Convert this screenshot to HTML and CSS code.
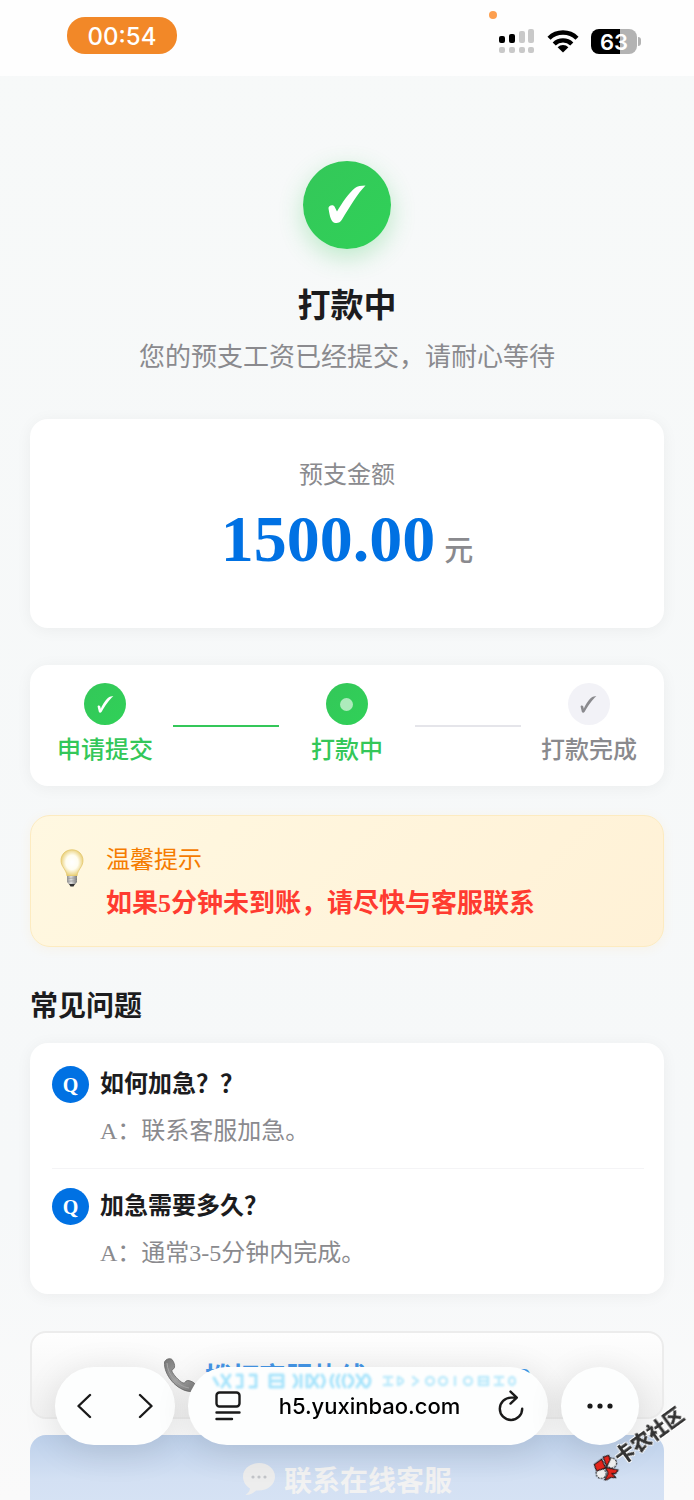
FILE: index.html
```html
<!DOCTYPE html>
<html lang="zh-CN">
<head>
  <meta charset="UTF-8">
  <meta name="viewport" content="width=device-width, initial-scale=1.0">
  <title>打款中</title>
  <link rel="stylesheet" href="styles.css">
</head>
<body>
  <header class="status-bar">
    <div class="clock">00:54</div>
    <div class="status-icons">
      <span class="rec-dot"></span>
      <svg class="signal" width="36" height="24" viewBox="0 0 36 24">
        <g fill="#000"><rect x="0" y="7" width="6" height="7" rx="2"/><rect x="10" y="5" width="6" height="9" rx="2"/></g>
        <g fill="#c9c9c9">
          <rect x="20" y="2" width="6" height="12" rx="2"/><rect x="29" y="0" width="6" height="14" rx="2"/>
          <rect x="0" y="18" width="6" height="6" rx="2"/><rect x="10" y="18" width="6" height="6" rx="2"/>
          <rect x="20" y="18" width="6" height="6" rx="2"/><rect x="29" y="18" width="6" height="6" rx="2"/>
        </g>
      </svg>
      <svg class="wifi" width="32" height="24" viewBox="0 0 32 24">
        <g fill="none" stroke="#000" stroke-width="4.4">
          <path d="M2 9.2 A20 20 0 0 1 30 9.2"/>
          <path d="M7.2 15 A12.6 12.6 0 0 1 24.8 15"/>
        </g>
        <path d="M16 23.5 L10.6 18.2 A7.6 7.6 0 0 1 21.4 18.2 Z" fill="#000"/>
      </svg>
      <span class="battery">63</span>
    </div>
  </header>

  <main class="page">
    <section class="hero">
      <div class="hero-icon">
        <svg width="40" height="40" viewBox="0 0 40 40"><path d="M1.5 23.5 C1 21 5.5 19 7.5 21.5 L10 26.5 C15 18 22 7.500 28 3 C30.500 1 34 .8 38.500 .5 C31 8 22 23 15 34.500 C13 38.500 8 39 5.500 36.500 C3 33.500 2.300 28 1.500 23.500 Z" fill="#fff"/></svg>
      </div>
      <h1>打款中</h1>
      <p>您的预支工资已经提交，请耐心等待</p>
    </section>

    <section class="card amount-card">
      <p class="amount-label">预支金额</p>
      <p class="amount"><span>1500.00</span><span class="unit">元</span></p>
    </section>

    <section class="card steps">
      <div class="step done">
        <span class="step-icon">
          <svg width="17" height="17" viewBox="0 0 40 40"><path d="M1.500 25 C1 22 6 21 7.500 24 L9 30 C14 18 22 7 28 3 C31 1 34 .8 38.500 .5 C29 8 19 23 11 37 C9 40 6 40 4.500 37.500 Z" fill="currentColor"/></svg>
        </span>
        <span class="step-label">申请提交</span>
      </div>
      <div class="line line-done"></div>
      <div class="step done">
        <span class="step-icon"><span class="step-dot"></span></span>
        <span class="step-label">打款中</span>
      </div>
      <div class="line"></div>
      <div class="step">
        <span class="step-icon">
          <svg width="17" height="17" viewBox="0 0 40 40"><path d="M1.500 25 C1 22 6 21 7.500 24 L9 30 C14 18 22 7 28 3 C31 1 34 .8 38.500 .5 C29 8 19 23 11 37 C9 40 6 40 4.500 37.500 Z" fill="currentColor"/></svg>
        </span>
        <span class="step-label">打款完成</span>
      </div>
    </section>

    <section class="tip">
      <svg class="bulb" width="24" height="38" viewBox="0 0 24 38">
        <defs>
          <radialGradient id="glass" cx="50%" cy="48%" r="55%">
            <stop offset="0" stop-color="#fff"/><stop offset=".5" stop-color="#fffdf0"/><stop offset="1" stop-color="#e6c967"/>
          </radialGradient>
          <linearGradient id="cap"><stop offset="0" stop-color="#8f8f8f"/><stop offset=".4" stop-color="#e2e2e2"/><stop offset="1" stop-color="#777"/></linearGradient>
        </defs>
        <path d="M12 .8 C5.500 .8 1 5.500 1 11.500 C1 18 6.500 20.500 7 27 L17 27 C17.500 20.500 23 18 23 11.500 C23 5.500 18.500 .8 12 .8 Z" fill="url(#glass)" stroke="#e3c66c" stroke-width=".8"/>
        <path d="M7 27 H17 V33 L15 35.500 H9 L7 33 Z" fill="url(#cap)"/>
        <path d="M7 29.500 L17 28.800 M7 32.300 L17 31.600" stroke="#999" stroke-width=".7"/>
        <path d="M9 35 H15 L13.500 37.500 H10.500 Z" fill="#333"/>
      </svg>
      <div>
        <p class="tip-title">温馨提示</p>
        <p class="tip-text">如果5分钟未到账，请尽快与客服联系</p>
      </div>
    </section>

    <h2>常见问题</h2>
    <section class="card faq">
      <div class="faq-item">
        <div class="question"><span class="q-badge">Q</span>如何加急？？</div>
        <p class="answer">A：联系客服加急。</p>
      </div>
      <div class="faq-item">
        <div class="question"><span class="q-badge">Q</span>加急需要多久？</div>
        <p class="answer">A：通常3-5分钟内完成。</p>
      </div>
    </section>

    <div class="actions">
      <button class="btn btn-phone" type="button">
        <svg width="34" height="34" viewBox="0 0 34 34">
          <defs><linearGradient id="handset" x1="0" y1="0" x2="1" y2="1"><stop offset="0" stop-color="#777"/><stop offset=".5" stop-color="#a5a5a5"/><stop offset="1" stop-color="#777"/></linearGradient></defs>
          <path d="M1.500 4 C3 .8 7 -.2 9 1.500 C11 4 12 7 11.500 9.500 C11 11.500 8.500 11 8.800 13 C10.500 17 15.500 22.500 20 25 C22.500 25.500 22 22.800 24.500 22.500 C27.500 22.500 31.500 24.500 33 27 C34 30 30 33.500 27 33.500 C14 32.500 .5 17 1.500 4 Z" fill="url(#handset)" stroke="#666" stroke-width=".8"/>
          <path d="M4 5 C4.500 17 15 28.500 26 30" fill="none" stroke="#aaa" stroke-width="1"/>
        </svg>
        拨打客服热线: 15700408169
      </button>
      <button class="btn btn-online" type="button">
        <svg width="34" height="34" viewBox="0 0 34 34">
          <path d="M17 1 C8 1 1 7 1 14.500 C1 20 4 24 8 26.500 C8 29 6 31 3.500 33 C8 33 11.500 31 14 28.500 C25 29.500 33 23 33 14.500 C33 7 26 1 17 1 Z" fill="#ededed"/>
          <g fill="#c3c5c9"><circle cx="11" cy="15" r="1.600"/><circle cx="17" cy="15" r="1.600"/><circle cx="23" cy="15" r="1.600"/></g>
        </svg>
        联系在线客服
      </button>
    </div>
  </main>

  <nav class="toolbar">
    <div class="pill pill-nav">
      <button type="button" aria-label="后退"><svg width="16" height="26" viewBox="0 0 16 26"><path d="M13 2 L1.500 13 L13 24"/></svg></button>
      <button type="button" aria-label="前进"><svg width="16" height="26" viewBox="0 0 16 26"><path d="M3 2 L14.500 13 L3 24"/></svg></button>
    </div>
    <div class="pill pill-url">
      <!-- light refracted through the top edge of the bar -->
      <svg class="glare" width="320" height="16" viewBox="0 0 320 16">
        <g fill="none" stroke="#a9e4fb" stroke-width="3">
          <path d="M4 5 L8 12 M12 2 L20 14 M20 2 L12 14 M27 2 H32 V14 H27 M40 2 H46 V14 H40 M60 2 H73 V14 H60 Z M62 8 H71 M84 2 Q90 8 84 14 M91 2 V14 M97 2 V14 M100 2 L108 14 M108 2 L100 14 M112 2 Q117 8 112 14 M123 2 Q119 8 123 14 M129 2 Q125 8 129 14 M135 2 Q131 8 135 14 M139 2 Q147 8 139 14 M147 2 L155 14 M155 2 L147 14 M157 2 Q163 8 157 14"/>
        </g>
        <g fill="none" stroke="#bdeafb" stroke-width="2.500">
          <path d="M174 4 H182 M178 4 V12 M174 12 H182 M188 4 V12 Q198 8 188 4 M203 4 L208 8 L203 12 M245 4 V12 M285 4 H293 M289 4 V12 M285 12 H293"/>
          <ellipse cx="220" cy="8" rx="4" ry="4"/><ellipse cx="233" cy="8" rx="4" ry="4"/><ellipse cx="258" cy="8" rx="4" ry="4"/><ellipse cx="302" cy="8" rx="3" ry="4"/>
          <path d="M269 4 H278 V12 H269 Z M269 8 H278"/>
        </g>
      </svg>
      <button type="button" aria-label="页面菜单">
        <svg width="26" height="30" viewBox="0 0 26 30"><rect x="1.500" y="1.500" width="23" height="14" rx="3"/><path d="M1.500 21.500 H24.500 M1.500 28 H17"/></svg>
      </button>
      <span class="url">h5.yuxinbao.com</span>
      <button type="button" aria-label="刷新">
        <svg width="26" height="32" viewBox="0 0 26 32"><path d="M18.500 7.600 H13 A11.200 11.200 0 1 0 24.200 18.800 M12.500 1.600 L18.800 7.600 L12.500 13.600"/></svg>
      </button>
    </div>
    <div class="pill pill-more">
      <button type="button" aria-label="更多"><svg class="dots" width="26" height="6" viewBox="0 0 26 6"><circle cx="3" cy="3" r="2.600"/><circle cx="13" cy="3" r="2.600"/><circle cx="23" cy="3" r="2.600"/></svg></button>
    </div>
  </nav>

  <div class="watermark">
    <svg width="26" height="26" viewBox="0 0 26 26">
      <g stroke="#111" stroke-width="1">
        <circle cx="18" cy="8.500" r="5" fill="#eee" stroke-dasharray="2 1"/><circle cx="7.500" cy="19" r="5" fill="#eee" stroke-dasharray="2 1"/>
        <path d="M.5 10 L8 4.500 L12 13.500 L3 16.500 Z M9.500 2.500 L15 .7 L16.500 5 L13 12 Z M12 13 L24.500 15.500 L22 19 L18.500 19 L22 23 L16.500 23 L13 25.500 L11 25.500 L14.500 19 Z" fill="#e3241b"/>
      </g>
    </svg>
    <span>卡农社区</span>
  </div>
</body>
</html>
```

FILE: styles.css
```css
* {
  box-sizing: border-box;
}

body {
  margin: 0;
  height: 100vh;
  overflow: hidden;
  font-family: "Liberation Serif", "Noto Sans CJK SC", serif;
  color: #1c1c1e;
  background: linear-gradient(#f7f9f9, #f6f8f9 80%, #fafafa);
}

h1, h2, p {
  margin: 0;
}

button {
  font-family: inherit;
  cursor: pointer;
}

svg {
  display: block;
  flex: none;
}

/* status bar */
.status-bar {
  display: flex;
  justify-content: space-between;
  height: 76px;
  padding: 17px 52px 0 67px;
  background: #fefefe;
  font-family: Inter, sans-serif;
}

.clock {
  width: 110px;
  height: 37px;
  border-radius: 18px;
  background: #f28828;
  color: #fff;
  font-size: 24px;
  font-weight: 500;
  line-height: 40px;
  text-align: center;
}

.status-icons {
  position: relative;
  display: flex;
  align-items: center;
  gap: 12px;
  height: 48px;
}

.rec-dot {
  position: absolute;
  top: -6px;
  left: -10px;
  width: 8px;
  height: 8px;
  border-radius: 50%;
  background: #fd9f4f;
}

.battery {
  position: relative;
  width: 46px;
  height: 25px;
  border-radius: 8px;
  background: linear-gradient(90deg, #000 63%, #b3b3b3 63%);
  color: #fff;
  font-size: 22px;
  font-weight: 600;
  line-height: 26px;
  text-align: center;
  margin-right: 5px;
}

.battery::after {
  content: "";
  position: absolute;
  top: 8px;
  right: -4px;
  width: 3px;
  height: 9px;
  border-radius: 0 3px 3px 0;
  background: #b3b3b3;
}

/* page */
.page {
  padding: 0 30px;
}

.card {
  background: #fff;
  border-radius: 18px;
  box-shadow: 0 2px 16px rgba(0, 0, 0, 0.05);
}

.hero {
  display: flex;
  flex-direction: column;
  align-items: center;
  padding: 85px 0 41px;
}

.hero-icon {
  display: flex;
  align-items: center;
  justify-content: center;
  width: 88px;
  height: 88px;
  border-radius: 50%;
  background: linear-gradient(135deg, #34c759, #30d158);
  box-shadow: 0 8px 24px rgba(52, 199, 89, 0.3);
}

.hero h1 {
  margin-top: 33px;
  font-size: 33px;
  line-height: 48px;
}

.hero p {
  margin-top: 8px;
  font-size: 26px;
  line-height: 40px;
  color: #8a8a8e;
}

.amount-card {
  height: 209px;
  padding-top: 36px;
  text-align: center;
}

.amount-label {
  font-size: 24px;
  line-height: 40px;
  color: #8a8a8e;
}

.amount {
  display: flex;
  align-items: baseline;
  justify-content: center;
  gap: 9px;
  font-size: 66px;
  font-weight: 700;
  line-height: 88px;
  color: #0071e3;
}

.unit {
  font-size: 29px;
  font-weight: 500;
  line-height: 40px;
  color: #8a8a8e;
}

/* progress */
.steps {
  display: grid;
  grid-template-columns: 9fr 7fr 9fr 7fr 9fr;
  align-items: center;
  margin-top: 37px;
  padding: 18px 7px;
}

.step {
  display: flex;
  flex-direction: column;
  align-items: center;
  gap: 7px;
  color: #8a8a8e;
}

.step-icon {
  display: flex;
  align-items: center;
  justify-content: center;
  width: 42px;
  height: 42px;
  border-radius: 50%;
  background: #f2f2f7;
}

.step-label {
  font-size: 24px;
  font-weight: 500;
  line-height: 36px;
  white-space: nowrap;
}

.done {
  color: #34c759;
}

.done .step-icon {
  color: #fff;
  background: linear-gradient(135deg, #34c759, #30d158);
}

.step-dot {
  width: 13px;
  height: 13px;
  border-radius: 50%;
  background: rgba(255, 255, 255, 0.6);
}

.line {
  height: 2px;
  background: #e5e5ea;
}

.line-done {
  background: #34c759;
}

/* tip */
.tip {
  display: flex;
  gap: 22px;
  height: 132px;
  margin-top: 29px;
  padding: 24px 29px;
  border: 1px solid #fdebc0;
  border-radius: 20px;
  background: linear-gradient(135deg, #fff8e1, #fff1d6);
  box-shadow: 0 2px 12px rgba(255, 180, 50, 0.08);
}

.bulb {
  margin-top: 9px;
}

.tip-title {
  font-size: 24px;
  line-height: 40px;
  color: #f57c00;
}

.tip-text {
  font-size: 26px;
  font-weight: 700;
  line-height: 48px;
  color: #ff3b30;
}

/* faq */
h2 {
  margin: 40px 0 16px;
  font-size: 28px;
  line-height: 40px;
}

.faq {
  padding: 4px 20px 4px 22px;
}

.faq-item {
  padding: 18px 0 17px;
}

.faq-item + .faq-item {
  border-top: 1px solid #f4f4f6;
}

.question {
  display: flex;
  align-items: center;
  gap: 11px;
  font-size: 24px;
  font-weight: 700;
  line-height: 38px;
}

.q-badge {
  width: 37px;
  height: 37px;
  border-radius: 50%;
  background: #0071e3;
  color: #fff;
  font-size: 20px;
  text-align: center;
}

.answer {
  margin-top: 8px;
  padding-left: 48px;
  font-size: 24px;
  line-height: 40px;
  color: #8a8a8e;
}

/* actions */
.actions {
  display: flex;
  flex-direction: column;
  gap: 16px;
  margin-top: 37px;
}

.btn {
  display: flex;
  align-items: center;
  justify-content: center;
  gap: 8px;
  height: 88px;
  border-radius: 16px;
  font-size: 28px;
  font-weight: 700;
  white-space: nowrap;
}

.btn-phone {
  border: 2px solid #ececec;
  background: linear-gradient(#fefefe, #f2f2f2);
  color: #4496e8;
  font-size: 27px;
}

.btn-online {
  border: none;
  background: linear-gradient(#bdd0ea, #d3e0f3 50%, #d8e4f5);
  color: #f2f2f2;
}

/* browser toolbar */
.toolbar {
  position: fixed;
  right: 55px;
  bottom: 55px;
  left: 55px;
  display: flex;
  gap: 13px;
  height: 78px;
}

.pill {
  position: relative;
  display: flex;
  border-radius: 39px;
  background: #fdfefe;
  box-shadow: 0 6px 36px rgba(0, 0, 0, 0.11);
}

.pill button {
  display: flex;
  flex: 1;
  align-items: center;
  justify-content: center;
  padding: 0;
  border: none;
  background: none;
}

.pill svg {
  fill: none;
  stroke: #1a1a1a;
  stroke-width: 2.4;
  stroke-linecap: round;
  stroke-linejoin: round;
}

.pill .dots {
  fill: #1a1a1a;
  stroke: none;
}

.pill-nav {
  flex: 0 0 120px;
}

.pill-url {
  flex: 1;
  align-items: center;
  padding-left: 3px;
}

.pill-url button {
  flex: 0 0 74px;
  height: 100%;
}

.pill-more {
  flex: 0 0 78px;
}

.pill .glare {
  position: absolute;
  top: 6px;
  left: 22px;
  filter: blur(1px);
}

.url {
  flex: 1;
  color: #000;
  font-family: Inter, sans-serif;
  font-size: 22px;
  font-weight: 500;
  text-align: center;
}

.watermark {
  position: fixed;
  right: 2px;
  bottom: 43px;
  display: flex;
  align-items: center;
  transform: rotate(-36deg);
  color: #333;
  font-size: 20px;
  font-weight: 900;
  line-height: 26px;
  text-shadow: 1px 0 #fff, -1px 0 #fff, 0 1px #fff, 0 -1px #fff;
}

.watermark svg {
  transform: rotate(36deg);
}
```
